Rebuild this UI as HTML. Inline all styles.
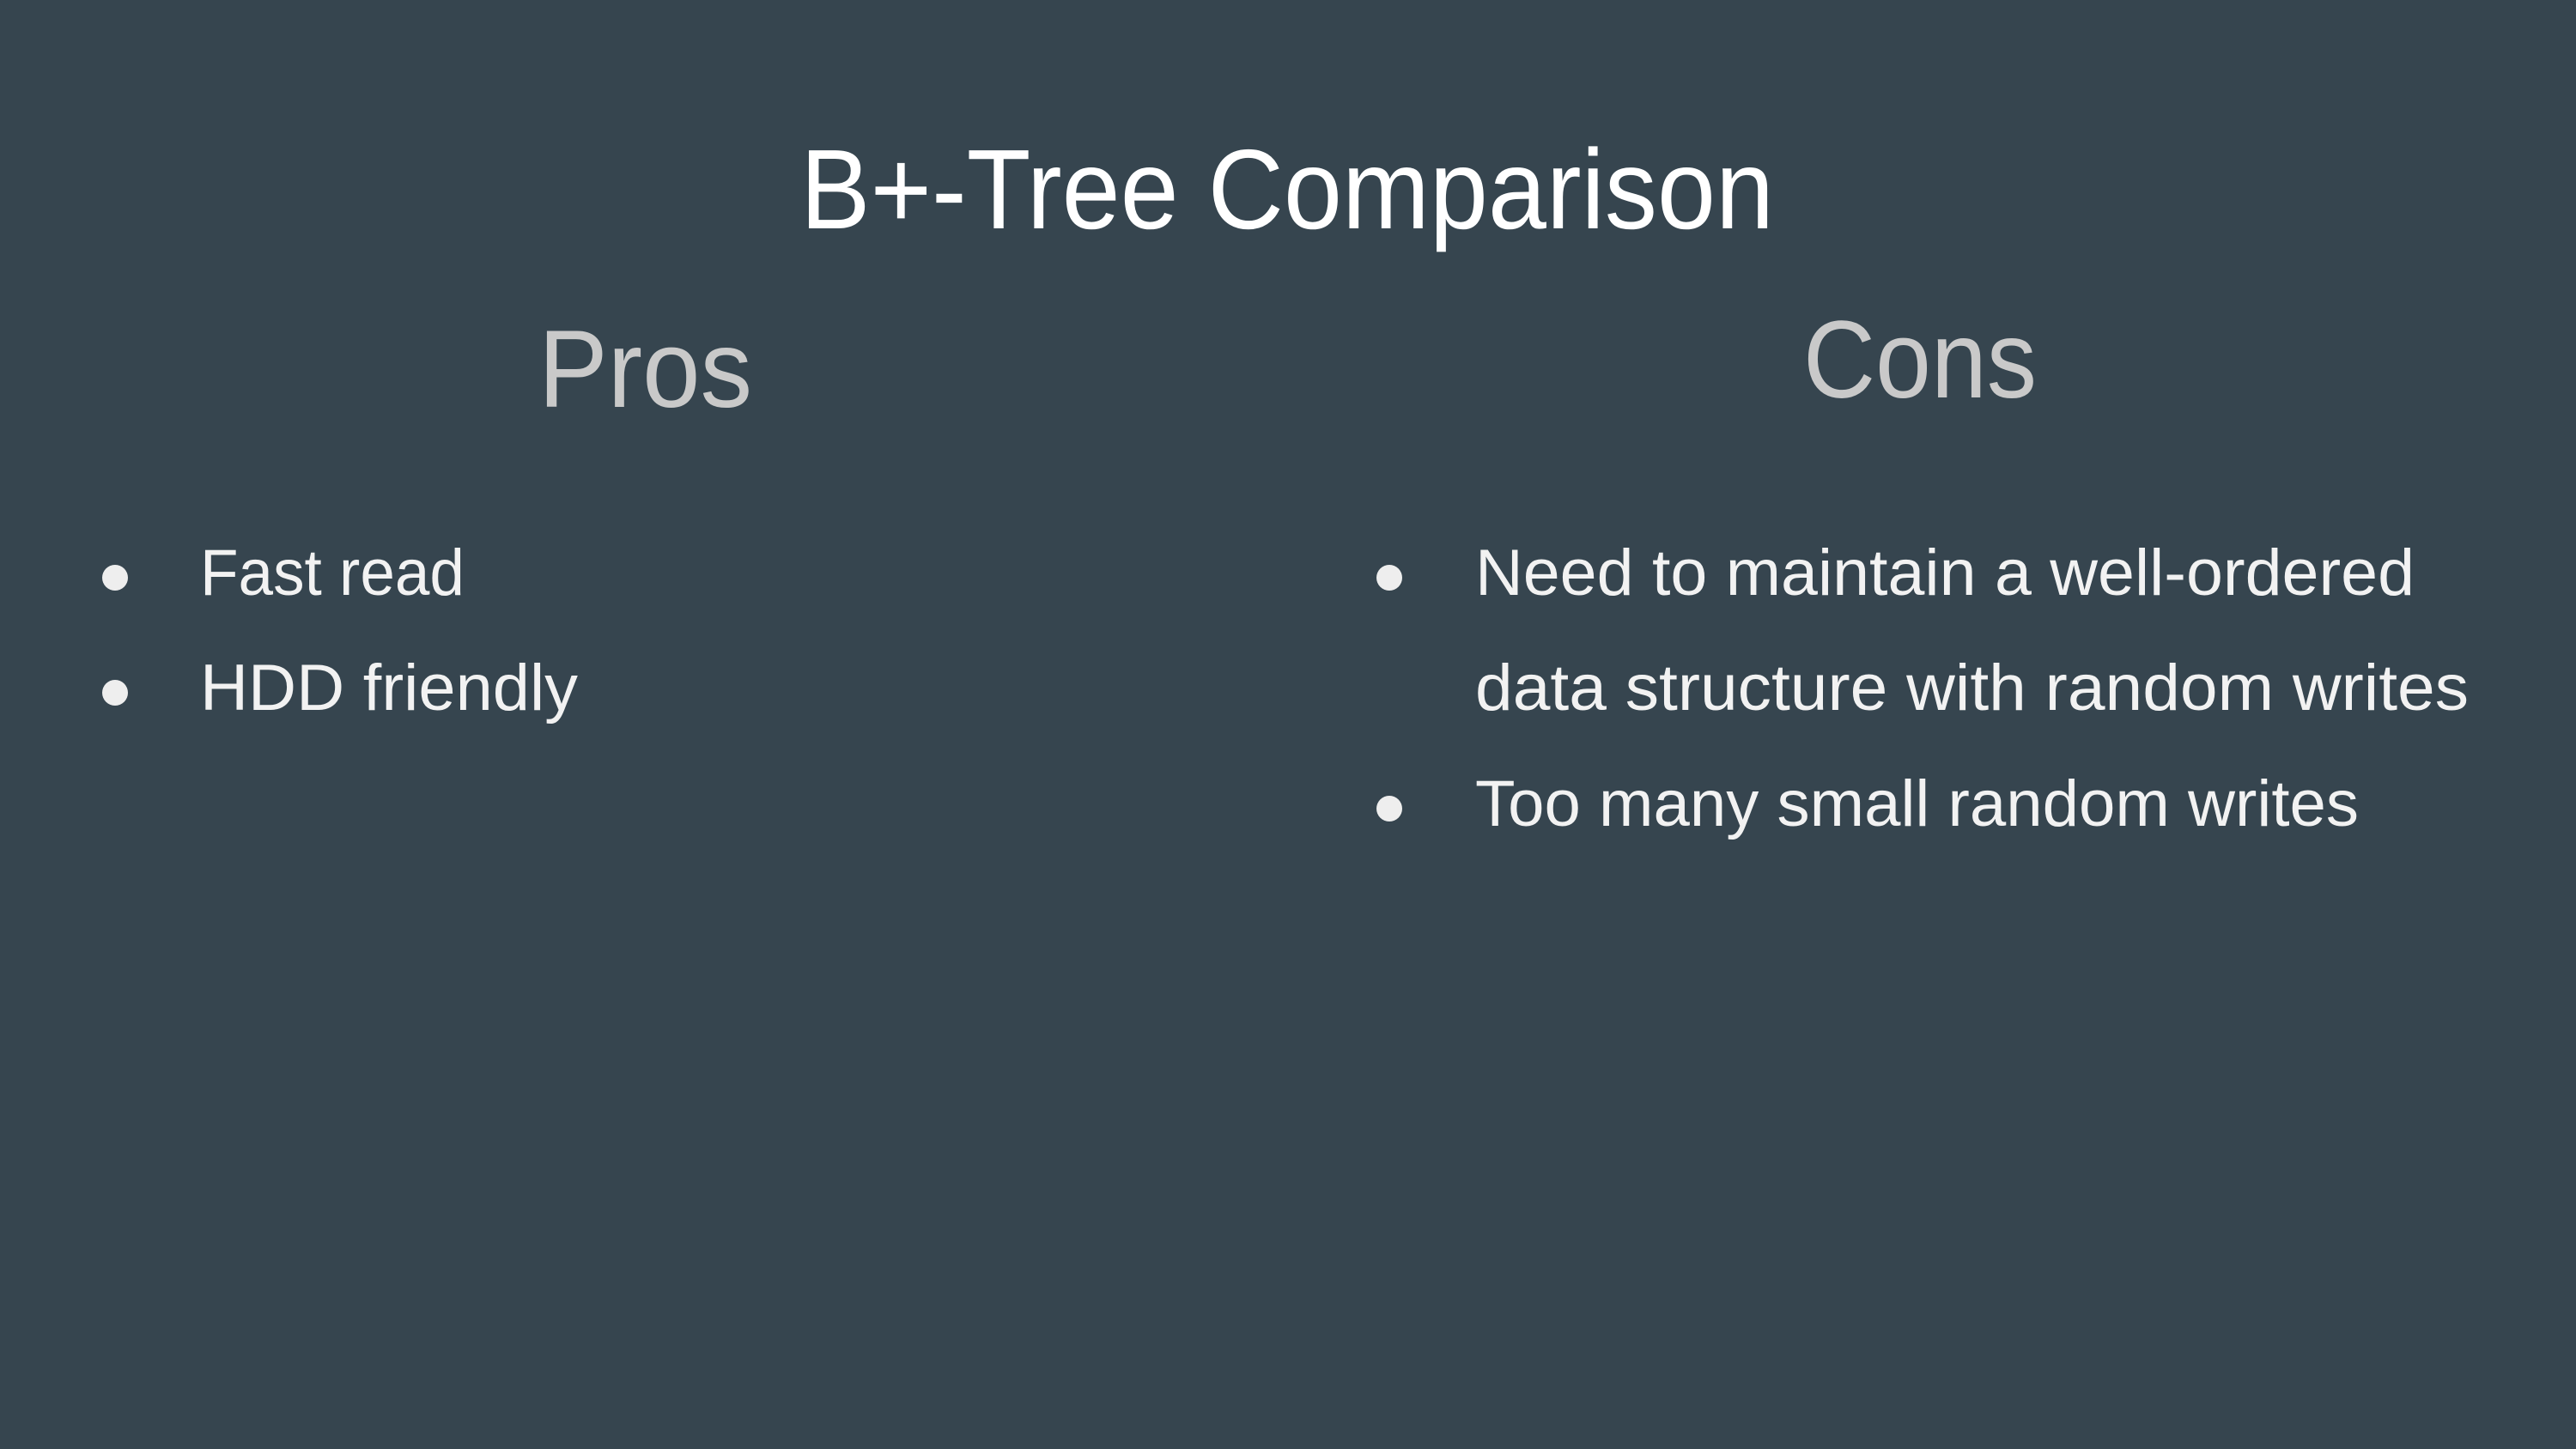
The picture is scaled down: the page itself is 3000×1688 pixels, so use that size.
<!DOCTYPE html>
<html><head><meta charset="utf-8"><style>
html,body{margin:0;padding:0;background:#36454f;}
svg{display:block}
text{font-family:"Liberation Sans",sans-serif;}
</style></head><body>
<svg width="3000" height="1688" viewBox="0 0 3000 1688" xmlns="http://www.w3.org/2000/svg">
<rect width="3000" height="1688" fill="#36454f"/>
<text x="932" y="266" font-size="132" fill="#ffffff" textLength="1134" lengthAdjust="spacingAndGlyphs">B+-Tree Comparison</text>
<text x="627" y="474" font-size="128" fill="#c9c9c9" textLength="249" lengthAdjust="spacingAndGlyphs">Pros</text>
<text x="2100" y="463" font-size="128" fill="#c9c9c9" textLength="272" lengthAdjust="spacingAndGlyphs">Cons</text>
<g fill="#eeeeee">
<circle cx="134" cy="673" r="15"/>
<circle cx="134" cy="807" r="15"/>
<circle cx="1618" cy="673" r="15"/>
<circle cx="1618" cy="942" r="15"/>
</g>
<g fill="#f2f2f2" font-size="76">
<text x="233" y="693" textLength="308" lengthAdjust="spacingAndGlyphs">Fast read</text>
<text x="233" y="827" textLength="440" lengthAdjust="spacingAndGlyphs">HDD friendly</text>
<text x="1718" y="693" textLength="1094" lengthAdjust="spacingAndGlyphs">Need to maintain a well-ordered</text>
<text x="1718" y="827" textLength="1157" lengthAdjust="spacingAndGlyphs">data structure with random writes</text>
<text x="1718" y="962" textLength="1029" lengthAdjust="spacingAndGlyphs">Too many small random writes</text>
</g>
</svg>
</body></html>
